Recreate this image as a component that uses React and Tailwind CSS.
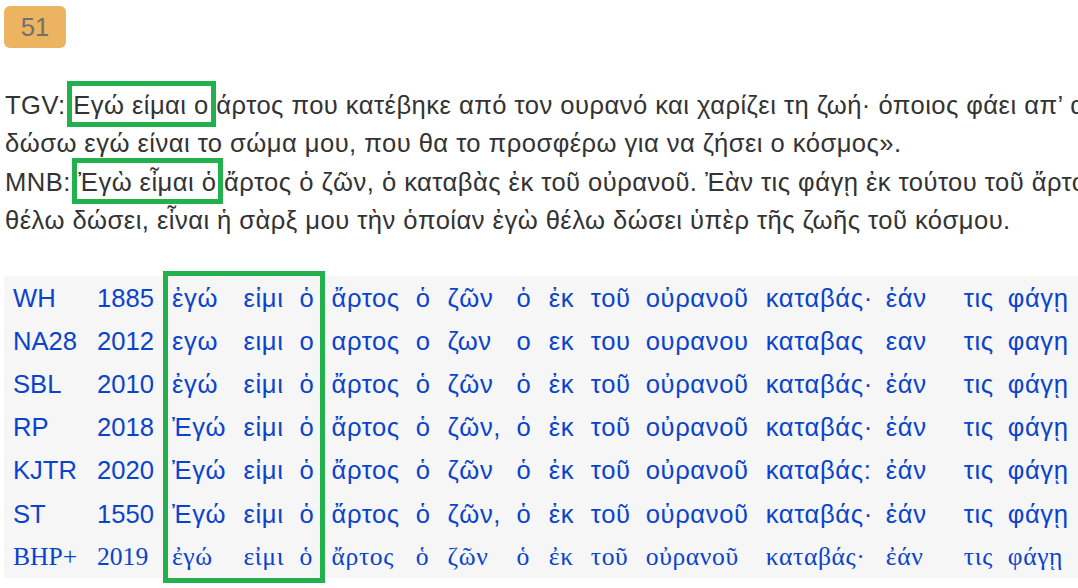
const rows = [
  { name: 'WH', year: '1885', words: ['ἐγώ', 'εἰμι', 'ὁ', 'ἄρτος', 'ὁ', 'ζῶν', 'ὁ', 'ἐκ', 'τοῦ', 'οὐρανοῦ', 'καταβάς·', 'ἐάν', 'τις', 'φάγῃ'] },
  { name: 'NA28', year: '2012', words: ['εγω', 'ειμι', 'ο', 'αρτος', 'ο', 'ζων', 'ο', 'εκ', 'του', 'ουρανου', 'καταβας', 'εαν', 'τις', 'φαγη'] },
  { name: 'SBL', year: '2010', words: ['ἐγώ', 'εἰμι', 'ὁ', 'ἄρτος', 'ὁ', 'ζῶν', 'ὁ', 'ἐκ', 'τοῦ', 'οὐρανοῦ', 'καταβάς·', 'ἐάν', 'τις', 'φάγῃ'] },
  { name: 'RP', year: '2018', words: ['Ἐγώ', 'εἰμι', 'ὁ', 'ἄρτος', 'ὁ', 'ζῶν,', 'ὁ', 'ἐκ', 'τοῦ', 'οὐρανοῦ', 'καταβάς·', 'ἐάν', 'τις', 'φάγῃ'] },
  { name: 'KJTR', year: '2020', words: ['Ἐγώ', 'εἰμι', 'ὁ', 'ἄρτος', 'ὁ', 'ζῶν', 'ὁ', 'ἐκ', 'τοῦ', 'οὐρανοῦ', 'καταβάς:', 'ἐάν', 'τις', 'φάγῃ'] },
  { name: 'ST', year: '1550', words: ['Ἐγώ', 'εἰμι', 'ὁ', 'ἄρτος', 'ὁ', 'ζῶν,', 'ὁ', 'ἐκ', 'τοῦ', 'οὐρανοῦ', 'καταβάς·', 'ἐάν', 'τις', 'φάγῃ'] },
  { name: 'BHP+', year: '2019', serif: true, words: ['ἐγώ', 'εἰμι', 'ὁ', 'ἄρτος', 'ὁ', 'ζῶν', 'ὁ', 'ἐκ', 'τοῦ', 'οὐρανοῦ', 'καταβάς·', 'ἐάν', 'τις', 'φάγῃ'] },
];

function Boxed({ children }) {
  return (
    <span className="relative">
      {children}
      <span className="pointer-events-none absolute -top-[10px] -bottom-[8px] -left-[6px] -right-[7px] border-[5px] border-[#22b14c]" />
    </span>
  );
}

export default function App() {
  return (
    <div className="w-[1078px] h-[588px] overflow-hidden bg-white font-['Liberation_Sans',Arial,sans-serif] text-[25.6px]">
      <div className="pl-[4px] pt-[6px]">
        <div className="flex h-[42px] w-[62px] items-center justify-center rounded-[6px] bg-[#ecb460] text-[#707070]">
          51
        </div>
      </div>

      <div className="mt-[38px] pl-[5px] leading-[38.4px] tracking-[0.45px] text-[#333333] whitespace-nowrap">
        <div>
          TGV: <Boxed>Εγώ είμαι ο</Boxed> άρτος που κατέβηκε από τον ουρανό και χαρίζει τη ζωή· όποιος φάει απ’ αυτό τον άρτο, θα ζήσει αιώνια. Ο άρτος που θα
        </div>
        <div>δώσω εγώ είναι το σώμα μου, που θα το προσφέρω για να ζήσει ο κόσμος».</div>
        <div>
          MNB: <Boxed>Ἐγὼ εἶμαι ὁ</Boxed> ἄρτος ὁ ζῶν, ὁ καταβὰς ἐκ τοῦ οὐρανοῦ. Ἐὰν τις φάγῃ ἐκ τούτου τοῦ ἄρτου, θὰ ζήσῃ εἰς τὸν αἰῶνα· καὶ ὁ ἄρτος δὲ τὸν ὁποῖον ἐγὼ
        </div>
        <div>θέλω δώσει, εἶναι ἡ σὰρξ μου τὴν ὁποίαν ἐγὼ θέλω δώσει ὑπὲρ τῆς ζωῆς τοῦ κόσμου.</div>
      </div>

      <div className="relative ml-[4px] mt-[36px] bg-[#f6f6f6] pl-[9px] text-[#0a44cc]">
        <div className="grid auto-rows-[43.14px] grid-cols-[84px_75px_71.5px_56px_32px_84.3px_31.7px_69px_32.3px_42px_55px_120px_120px_78px_44px_1fr] items-center whitespace-nowrap">
          {rows.map((r) => (
            <div key={r.name} className={r.serif ? "contents font-['Liberation_Serif','Times_New_Roman',serif]" : 'contents'}>
              <div className="pt-[2px]">{r.name}</div>
              <div className="pt-[2px]">{r.year}</div>
              {r.words.map((w, i) => (
                <div key={i} className="pt-[2px] tracking-[0.6px]">{w}</div>
              ))}
            </div>
          ))}
        </div>
        <div className="pointer-events-none absolute left-[159px] -top-[5px] h-[312px] w-[162px] border-[5px] border-[#22b14c]" />
      </div>
    </div>
  );
}
